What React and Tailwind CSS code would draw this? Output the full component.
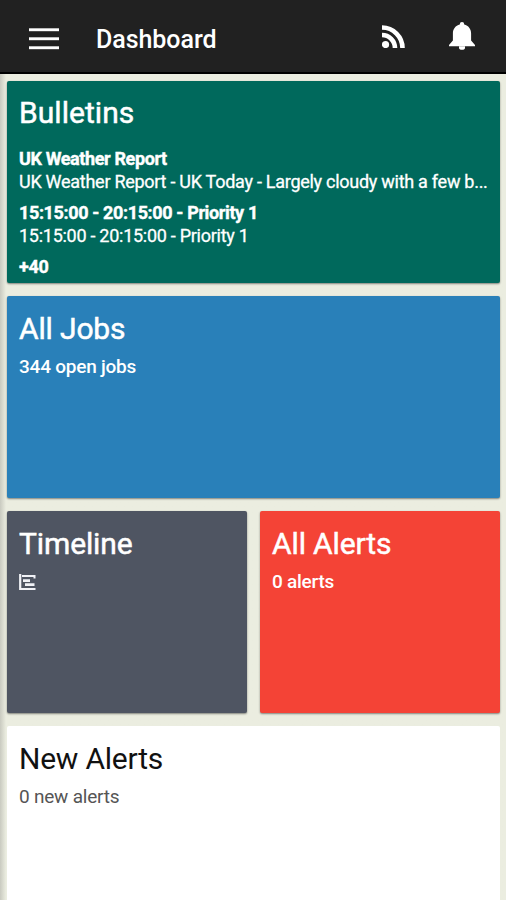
import clsx from 'clsx';

function MenuIcon() {
  return (
    <svg width="30" height="22" viewBox="0 0 30 22" fill="#fff" aria-hidden="true">
      <rect y="0.3" width="30" height="2.9" />
      <rect y="9.3" width="30" height="2.9" />
      <rect y="18.3" width="30" height="2.9" />
    </svg>
  );
}

function FeedIcon() {
  return (
    <svg width="23" height="23" viewBox="0 0 23 23" fill="none" stroke="#fff" strokeWidth="4.6" aria-hidden="true">
      <circle cx="3.5" cy="19.5" r="3.6" fill="#fff" stroke="none" />
      <path d="M0 10A13 13 0 0 1 13 23" />
      <path d="M0 2.500A20.500 20.500 0 0 1 20.500 23" />
    </svg>
  );
}

function BellIcon() {
  return (
    <svg width="26" height="28" viewBox="0 0 26 28" fill="#fff" aria-hidden="true">
      <path d="M13 0a2.200 2.200 0 0 1 2.200 2.200v.2c4.200 1 6.900 4.500 6.900 9V18.500l3.900 4.500V24.300H0V23L3.900 18.500v-7.100c0-4.500 2.700-8 6.900-9v-.2A2.200 2.200 0 0 1 13 0z" />
      <path d="M10 24.300h6v1.500a3 2 0 0 1-6 0z" />
    </svg>
  );
}

function ChartIcon() {
  return (
    <svg className="mt-[10px] block" width="17" height="16" viewBox="0 0 17 16" fill="none" stroke="#f1f2f7" strokeWidth="2" aria-hidden="true">
      <path d="M1.200 0v15h15.300" strokeWidth="2.200" />
      <path d="M3 2h12.500v2.500" strokeWidth="2" />
      <path d="M4 6.700h7M6 10.700h9.500" strokeWidth="2.700" />
    </svg>
  );
}

function Tile({ title, className, children }) {
  return (
    <section className={clsx('h-[202px] rounded-[2px] px-3 pt-3', className)}>
      <h2 className="text-[30px] leading-10">{title}</h2>
      {children}
    </section>
  );
}

export default function App() {
  return (
    <div className="flex h-[900px] w-[506px] flex-col overflow-hidden bg-[#ebede0] font-['Roboto','Liberation_Sans',sans-serif] text-[19px] text-white">
      <header className="flex h-[74px] shrink-0 items-center border-b-2 border-black bg-[#212121] pr-[31px] pl-[29px] pt-[5px]">
        <button aria-label="Menu">
          <MenuIcon />
        </button>
        <h1 className="ml-[37px] flex-1 pt-[2px] text-[25px] leading-8 font-medium tracking-[-0.05px]">Dashboard</h1>
        <button aria-label="Feed" className="mr-[44px] -mt-[4px]">
          <FeedIcon />
        </button>
        <button aria-label="Notifications" className="-mt-[5px]">
          <BellIcon />
        </button>
      </header>

      <main className="grid flex-1 grid-cols-2 content-start gap-[13px] bg-linear-to-r from-[#c9cac0] to-[#ebede0] to-[6px] pt-[7px] pr-[6px] pl-[7px]">
        <Tile title="Bulletins" className="col-span-2 bg-[#00695c] shadow-[0_1px_2px_rgba(0,0,0,0.45)] [&>h2]:tracking-[0.05px] [&>h2]:[-webkit-text-stroke:0.5px]">
          <div className="mt-[13px] pt-px text-[18px] leading-[23px] tracking-[-0.27px] whitespace-nowrap">
            <p className="font-bold tracking-[-0.38px] [-webkit-text-stroke:0.4px]">UK Weather Report</p>
            <p className="[-webkit-text-stroke:0.3px]">UK Weather Report - UK Today - Largely cloudy with a few b...</p>
            <p className="mt-2 font-bold tracking-[-0.37px] [-webkit-text-stroke:0.4px]">15:15:00 - 20:15:00 - Priority 1</p>
            <p className="[-webkit-text-stroke:0.3px]">15:15:00 - 20:15:00 - Priority 1</p>
            <p className="mt-2 font-bold [-webkit-text-stroke:0.4px]">+40</p>
          </div>
        </Tile>
        <Tile title="All Jobs" className="col-span-2 bg-[#2980b9] pt-[13px] shadow-[0_1px_2px_rgba(0,0,0,0.45)] [&>h2]:tracking-[-0.15px] [&>h2]:[-webkit-text-stroke:0.5px]">
          <p className="mt-[6px] leading-6 font-medium tracking-[-0.23px]">344 open jobs</p>
        </Tile>
        <Tile title="Timeline" className="bg-[#4f5562] pt-[13px] shadow-[0_1px_2px_rgba(0,0,0,0.45)] [&>h2]:tracking-[-0.12px] [&>h2]:[-webkit-text-stroke:0.5px]">
          <ChartIcon />
        </Tile>
        <Tile title="All Alerts" className="bg-[#f44336] pt-[13px] shadow-[0_1px_2px_rgba(0,0,0,0.45)] [&>h2]:tracking-[-0.12px] [&>h2]:[-webkit-text-stroke:0.5px]">
          <p className="mt-[6px] leading-6 font-medium tracking-[-0.25px]">0 alerts</p>
        </Tile>
        <Tile title="New Alerts" className="col-span-2 bg-white pt-[13px] text-[#111] [&>h2]:tracking-[-0.22px]">
          <p className="mt-[6px] leading-6 tracking-[-0.22px] text-[#555]">0 new alerts</p>
        </Tile>
      </main>
    </div>
  );
}
